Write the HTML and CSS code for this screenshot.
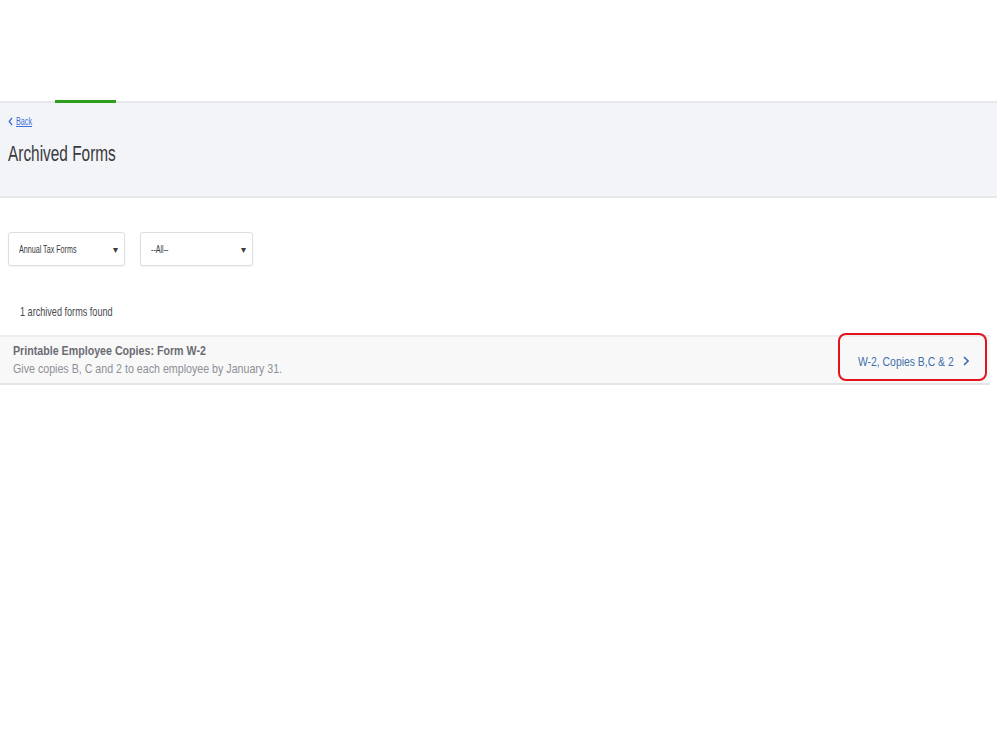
FILE: index.html
```html
<!DOCTYPE html>
<html lang="en">
<head>
<meta charset="utf-8">
<title>Archived Forms</title>
<link rel="stylesheet" href="styles.css">
</head>
<body>
<div class="top-space"></div>
<header class="page-head">
  <div class="tab-indicator"></div>
  <a class="back" href="#"><svg class="back-chev" width="5" height="9" viewBox="0 0 5 9"><path d="M4 1 L1.2 4.5 L4 8" fill="none" stroke="#3b6fd6" stroke-width="1.3"/></svg><span class="back-text">Back</span></a>
  <h1 class="title"><span class="squeeze">Archived Forms</span></h1>
</header>
<main class="content">
  <div class="filters">
    <div class="select select-type"><span class="squeeze select-text">Annual Tax Forms</span><span class="caret">▾</span></div>
    <div class="select select-year"><span class="squeeze select-text">--All--</span><span class="caret">▾</span></div>
  </div>
  <p class="count"><span class="squeeze">1 archived forms found</span></p>
  <div class="form-row">
    <div class="form-info">
      <div class="form-name"><span class="squeeze-row">Printable Employee Copies: Form W-2</span></div>
      <div class="form-desc"><span class="squeeze-row">Give copies B, C and 2 to each employee by January 31.</span></div>
    </div>
    <a class="form-link" href="#"><span class="squeeze-r">W-2, Copies B,C &amp; 2</span><svg class="chev" width="6" height="10" viewBox="0 0 6 10"><path d="M1 1 L5 5 L1 9" fill="none" stroke="#3f6fa9" stroke-width="1.6"/></svg></a>
    <div class="highlight"></div>
  </div>
</main>
</body>
</html>
```
FILE: styles.css
```css
* { box-sizing: border-box; }
html, body { margin: 0; padding: 0; background: #fff; }
body {
  font-family: "Liberation Sans", Arial, sans-serif;
  color: #393a3d;
  width: 999px;
  height: 749px;
  overflow: hidden;
}
.squeeze {
  display: inline-block;
  white-space: nowrap;
  transform: scaleX(0.7);
  transform-origin: left center;
}
.squeeze-row {
  display: inline-block;
  white-space: nowrap;
  transform: scaleX(0.82);
  transform-origin: left center;
}
.squeeze-r {
  display: inline-block;
  white-space: nowrap;
  transform: scaleX(0.8);
  transform-origin: right center;
}
.top-space { height: 101px; }
.page-head {
  position: relative;
  width: 997px;
  background: #f3f4f8;
  border-top: 2px solid #e6e8ec;
  border-bottom: 2px solid #e6e8ec;
  height: 97px;
  padding: 11px 8px 0;
}
.tab-indicator {
  position: absolute;
  left: 55px;
  top: -3px;
  width: 61px;
  height: 3px;
  background: #2ca01c;
}
.back {
  display: flex;
  align-items: center;
  gap: 3px;
  height: 14px;
  color: #3b6fd6;
  font-size: 10px;
  text-decoration: none;
}
.back-text { text-decoration: underline; display: inline-block; transform: scaleX(0.72); transform-origin: left center; }
.title {
  margin: 12px 0 0;
  font-size: 22px;
  line-height: 28px;
  font-weight: normal;
  color: #393a3d;
}
.content { padding-top: 34px; }
.filters { display: flex; gap: 15px; padding-left: 8px; }
.select {
  display: flex;
  align-items: center;
  justify-content: space-between;
  height: 34px;
  padding: 0 6px 0 10px;
  border: 1px solid #dcdee2;
  border-radius: 3px;
  box-shadow: 0 1px 2px rgba(0,0,0,0.06);
  background: #fff;
}
.select-type { width: 117px; }
.select-year { width: 113px; }
.select-text { font-size: 11px; color: #393a3d; transform: scaleX(0.65); }
.caret { font-size: 10px; color: #393a3d; }
.count {
  margin: 38px 0 0 20px;
  font-size: 13px;
  line-height: 16px;
  color: #4a4b50;
}
.form-row {
  position: relative;
  margin-top: 15px;
  width: 990px;
  height: 50px;
  display: flex;
  align-items: center;
  justify-content: space-between;
  background: #f8f8f9;
  border-top: 2px solid #eceef1;
  border-bottom: 2px solid #e3e5ea;
  padding: 0 21px 0 13px;
}
.form-name { font-size: 13px; font-weight: bold; color: #6b6c72; line-height: 16px; }
.form-desc { font-size: 13px; color: #8d9096; line-height: 16px; margin-top: 2px; }
.form-link {
  display: flex;
  align-items: center;
  gap: 9px;
  margin-top: 2px;
  color: #3f6fa9;
  font-size: 13px;
  text-decoration: none;
}
.highlight {
  position: absolute;
  left: 838px;
  top: -4px;
  width: 149px;
  height: 48px;
  border: 2px solid #e3141b;
  border-radius: 8px;
}
```
